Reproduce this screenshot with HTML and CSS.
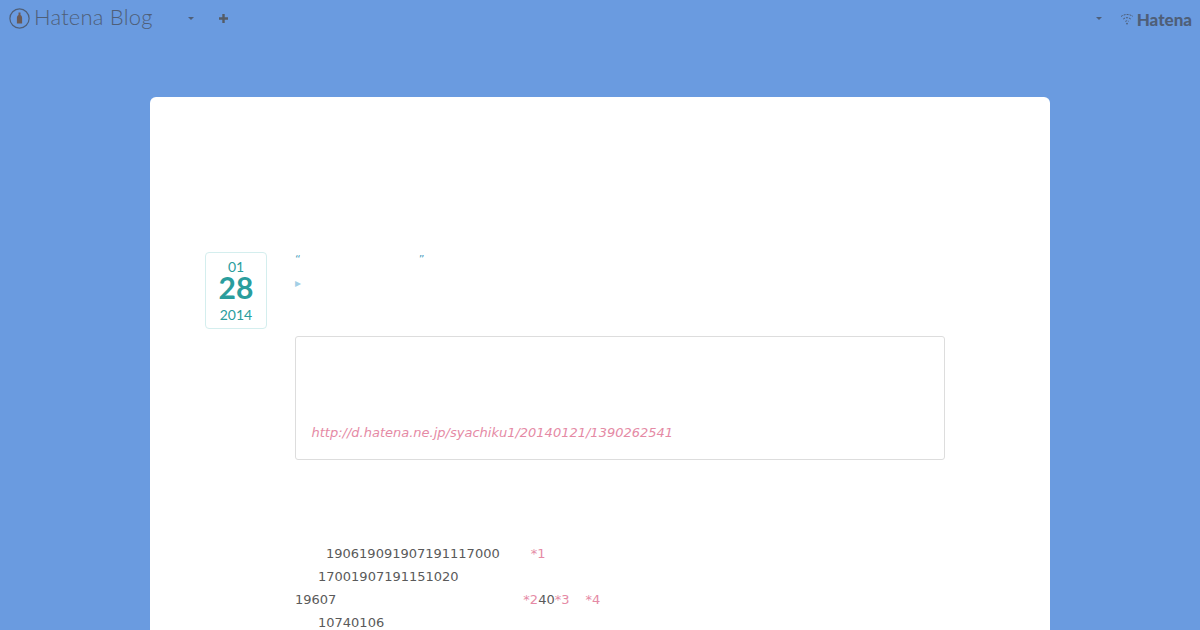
FILE: index.html
```html
<!DOCTYPE html>
<html lang="en">
<head>
  <meta charset="UTF-8" />
  <meta name="viewport" content="width=device-width, initial-scale=1" />
  <title>Hatena Blog</title>
  <link rel="stylesheet" href="styles.css">
</head>
<body>
  <div class="globalheader">
    <a class="brand" href="#">
      <svg class="brand-icon" width="21" height="21" viewBox="0 0 21 21">
        <circle cx="10.5" cy="10.5" r="9.6" fill="none" stroke="#4f5f78" stroke-width="1.2" />
        <path d="M9.5 4.5h2v2.6c1.1.7 1.6 1.6 1.6 2.8v5.6H7.9V9.9c0-1.2.5-2.1 1.6-2.8z" fill="#6b5a55" />
      </svg>
      <span class="brand-name">Hatena Blog</span>
    </a>
    <span class="caret brand-caret"></span>
    <svg class="plus" width="11" height="11" viewBox="0 0 11 11">
      <path d="M5.5 1v9M1 5.500h9" stroke="#555c66" stroke-width="2.400" fill="none" />
    </svg>
    <div class="header-right">
      <span class="caret"></span>
      <a class="hatena" href="#">
        <svg class="hatena-icon" width="14" height="12" viewBox="0 0 14 12">
          <path d="M1 3.500C4.500 .8 9.500 .8 13 3.500M3.200 6C5.500 4.200 8.500 4.200 10.800 6M5.300 8.400c1.100-.8 2.300-.8 3.400 0" stroke="#4f5f78" stroke-width="1" stroke-dasharray="2 1" fill="none" />
          <circle cx="7" cy="10.600" r=".9" fill="#4f5f78" />
        </svg>
        <span>Hatena</span>
      </a>
    </div>
  </div>

  <div class="wrapper">
    <div class="entry">
      <div class="date">
        <span class="date-month">01</span>
        <span class="date-day">28</span>
        <span class="date-year">2014</span>
      </div>
      <div class="entry-body">
        <div class="entry-title">
          <span>“</span>
          <span class="title-gap"></span>
          <span>”</span>
        </div>
        <div class="entry-category">▸</div>
        <blockquote class="quote">
          <a href="#">http://d.hatena.ne.jp/syachiku1/20140121/1390262541</a>
        </blockquote>
        <div class="entry-text">
          <p class="indent-lg">190619091907191117000<span class="gap-31"></span><a href="#">*1</a></p>
          <p class="indent-sm">17001907191151020</p>
          <p>19607<span class="gap-187"></span><a href="#">*2</a>40<a href="#">*3</a><span class="gap-16"></span><a href="#">*4</a></p>
          <p class="indent-sm">10740106</p>
        </div>
      </div>
    </div>
  </div>
</body>
</html>
```

FILE: styles.css
```css
html, body {
  height: 100%;
  overflow: hidden;
}

body {
  margin: 0;
  background: #6a9be0;
  color: #5a5a5a;
  font-family: 'DejaVu Sans', sans-serif;
  font-size: 13px;
}

a {
  color: inherit;
  text-decoration: none;
}

.globalheader {
  display: flex;
  align-items: center;
  height: 37px;
  padding: 0 8px 0 9px;
  color: #4f5f78;
}

.brand {
  display: flex;
  align-items: center;
  gap: 4px;
}

.brand-name {
  margin-top: -5px;
  font-family: 'Lato', sans-serif;
  font-weight: 300;
  font-size: 22px;
  letter-spacing: 0.2px;
}

.caret {
  width: 0;
  height: 0;
  border-left: 3px solid transparent;
  border-right: 3px solid transparent;
  border-top: 3px solid #4f5f78;
}

.brand-caret {
  margin-left: 35px;
}

.plus {
  margin-left: 24px;
}

.header-right {
  display: flex;
  align-items: center;
  gap: 18px;
  margin-left: auto;
}

.hatena {
  display: flex;
  align-items: center;
  gap: 3px;
  font-family: 'Lato', sans-serif;
  font-weight: 900;
  font-size: 17px;
}

.hatena span {
  margin-top: 2px;
}

.wrapper {
  width: 900px;
  margin: 60px auto 0;
  background: #fff;
  border-radius: 6px;
  padding: 155px 105px 60px 55px;
  box-sizing: border-box;
  height: 900px;
}

.entry {
  display: flex;
  align-items: flex-start;
  gap: 28px;
}

.date {
  display: flex;
  flex-direction: column;
  align-items: center;
  flex: none;
  box-sizing: border-box;
  width: 62px;
  height: 77px;
  padding-top: 6px;
  border: 1px solid #d4eeee;
  border-radius: 4px;
  color: #2a9d9d;
  font-family: 'Lato', sans-serif;
}

.date-month {
  font-size: 14px;
  line-height: 15px;
}

.date-day {
  font-size: 30px;
  font-weight: 700;
  line-height: 26px;
}

.date-year {
  margin-top: 7px;
  font-size: 14px;
  line-height: 16px;
}

.entry-body {
  flex: 1;
  min-width: 0;
}

.entry-title {
  display: flex;
  height: 13px;
  color: #4f9fc0;
  font-size: 11px;
  line-height: 15px;
}

.title-gap {
  width: 118px;
}

.entry-category {
  height: 59px;
  margin-top: 12px;
  color: #a3cfe6;
  font-size: 12px;
  line-height: 12px;
}

.quote {
  box-sizing: border-box;
  height: 124px;
  margin: 0;
  padding: 86px 15.5px 0;
  border: 1px solid #ddd;
  border-radius: 3px;
  color: #e58aa5;
  font-style: italic;
  line-height: 20px;
}

.entry-text {
  margin-top: 82px;
  line-height: 23px;
}

.entry-text p {
  margin: 0;
}

.entry-text a {
  color: #e58aa5;
}

.indent-lg {
  padding-left: 31px;
}

.indent-sm {
  padding-left: 23px;
}

.gap-31,
.gap-187,
.gap-16 {
  display: inline-block;
}

.gap-31 {
  width: 31px;
}

.gap-187 {
  width: 187px;
}

.gap-16 {
  width: 16px;
}
```
